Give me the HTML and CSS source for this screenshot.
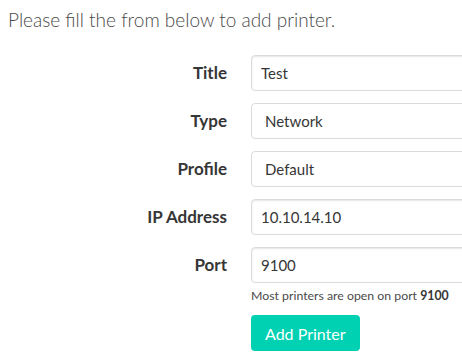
FILE: index.html
```html
<!DOCTYPE html>
<html lang="en">
<head>
    <meta charset="UTF-8">
    <meta name="viewport" content="width=device-width, initial-scale=1.0">
    <title>Add Printer</title>
    <link rel="stylesheet" href="styles.css">
</head>
<body>
    <main class="container">
        <h2 class="subtitle">Please fill the from below to add printer.</h2>
        <form class="printer-form">
            <div class="field">
                <label class="field-label">Title</label>
                <div class="field-body">
                    <input class="input" type="text" value="Test">
                </div>
            </div>
            <div class="field">
                <label class="field-label">Type</label>
                <div class="field-body">
                    <div class="select">Network</div>
                </div>
            </div>
            <div class="field">
                <label class="field-label">Profile</label>
                <div class="field-body">
                    <div class="select">Default</div>
                </div>
            </div>
            <div class="field">
                <label class="field-label">IP Address</label>
                <div class="field-body">
                    <input class="input" type="text" value="10.10.14.10">
                </div>
            </div>
            <div class="field field-port">
                <label class="field-label">Port</label>
                <div class="field-body">
                    <input class="input" type="text" value="9100">
                    <p class="help">Most printers are open on port <b>9100</b></p>
                </div>
            </div>
            <div class="field">
                <div class="field-label"></div>
                <div class="field-body">
                    <button type="button" class="button">Add Printer</button>
                </div>
            </div>
        </form>
    </main>
</body>
</html>
```

FILE: styles.css
```css
* {
    box-sizing: border-box;
    margin: 0;
    padding: 0;
}

body {
    font-family: 'Lato', 'Liberation Sans', sans-serif;
    color: #4a4a4a;
    background-color: #fff;
    overflow: hidden;
}

.container {
    width: 700px;
    padding: 0 8px;
}

.subtitle {
    font-size: 19px;
    font-weight: 300;
    line-height: 1.25;
    color: #4a4a4a;
    padding-top: 8px;
    margin-bottom: 23px;
}

.field {
    display: flex;
    margin-bottom: 12px;
}

.field-label {
    width: 219px;
    margin-right: 24px;
    text-align: right;
    font-size: 17px;
    font-weight: 700;
    color: #363636;
    padding-top: 7px;
}

.field-body {
    flex: 1;
}

.input,
.select {
    display: block;
    width: 100%;
    height: 36px;
    font-family: inherit;
    font-size: 15px;
    color: #363636;
    background-color: #fff;
    border: 1px solid #dbdbdb;
    border-radius: 4px;
    box-shadow: inset 0 1px 2px rgba(10, 10, 10, 0.1);
    padding: 0 9px;
    line-height: 34px;
}

.select {
    padding-left: 13px;
    box-shadow: none;
}

.help {
    font-size: 12.3px;
    line-height: 1.5;
    margin-top: 4px;
    color: #4a4a4a;
}

.help b {
    color: #363636;
}

.field-port {
    margin-bottom: 10px;
}

.button {
    font-family: inherit;
    font-size: 16px;
    color: #fff;
    background-color: #00d1b2;
    border: 1px solid transparent;
    border-radius: 4px;
    height: 36px;
    padding: 0 13px;
    cursor: pointer;
}
```
